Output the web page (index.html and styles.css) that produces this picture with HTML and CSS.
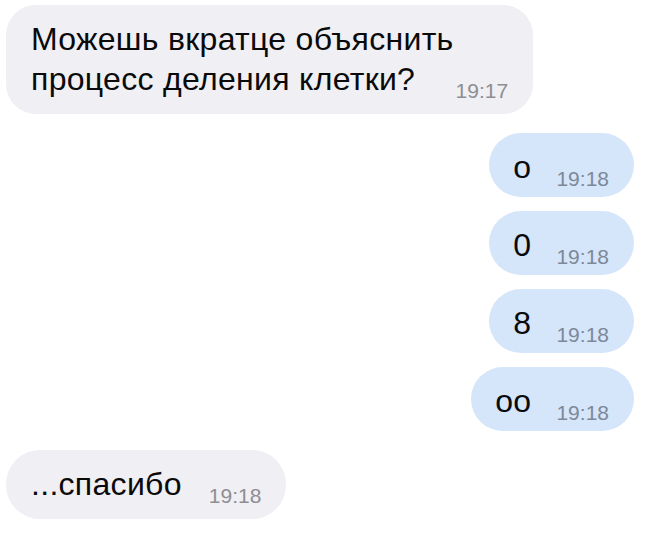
FILE: index.html
```html
<!DOCTYPE html>
<html lang="ru">
<head>
<meta charset="utf-8">
<title>Чат</title>
<link rel="stylesheet" href="styles.css">
</head>
<body>
<div class="chat">
  <div class="msg in first">
    <div class="text">Можешь вкратце объяснить<br>процесс деления клетки?</div>
    <span class="time">19:17</span>
  </div>
  <div class="msg out gap-l">
    <div class="text">о</div>
    <span class="time">19:18</span>
  </div>
  <div class="msg out">
    <div class="text">0</div>
    <span class="time">19:18</span>
  </div>
  <div class="msg out">
    <div class="text">8</div>
    <span class="time">19:18</span>
  </div>
  <div class="msg out">
    <div class="text">оо</div>
    <span class="time">19:18</span>
  </div>
  <div class="msg in gap-l">
    <div class="text">...спасибо</div>
    <span class="time">19:18</span>
  </div>
</div>
</body>
</html>
```

FILE: styles.css
```css
html, body {
  margin: 0;
  padding: 0;
  background: #ffffff;
}

.chat {
  display: flex;
  flex-direction: column;
  padding: 5px 16px 0 6px;
  gap: 14px;
  font-family: "Liberation Sans", Arial, sans-serif;
}

.msg {
  display: flex;
  align-items: flex-end;
  gap: 27px;
  border-radius: 34px;
}

.msg.gap-l {
  margin-top: 5px;
}

.msg.in {
  align-self: flex-start;
  background: #efeff4;
  padding: 14px 25px 15px 25px;
}

.msg.in.first {
  gap: 2px;
  border-radius: 30px;
}

.msg.out {
  align-self: flex-end;
  gap: 25px;
  background: #d5e5fa;
  padding: 14px 25px 10px 24px;
}

.text {
  font-size: 32px;
  line-height: 40px;
  letter-spacing: 0.3px;
  color: #0a0a0a;
}

.time {
  font-size: 21px;
  line-height: 21px;
  margin-bottom: -2px;
  color: #8e8e93;
  white-space: nowrap;
}

.msg.out .time {
  color: #7d8899;
}
```
